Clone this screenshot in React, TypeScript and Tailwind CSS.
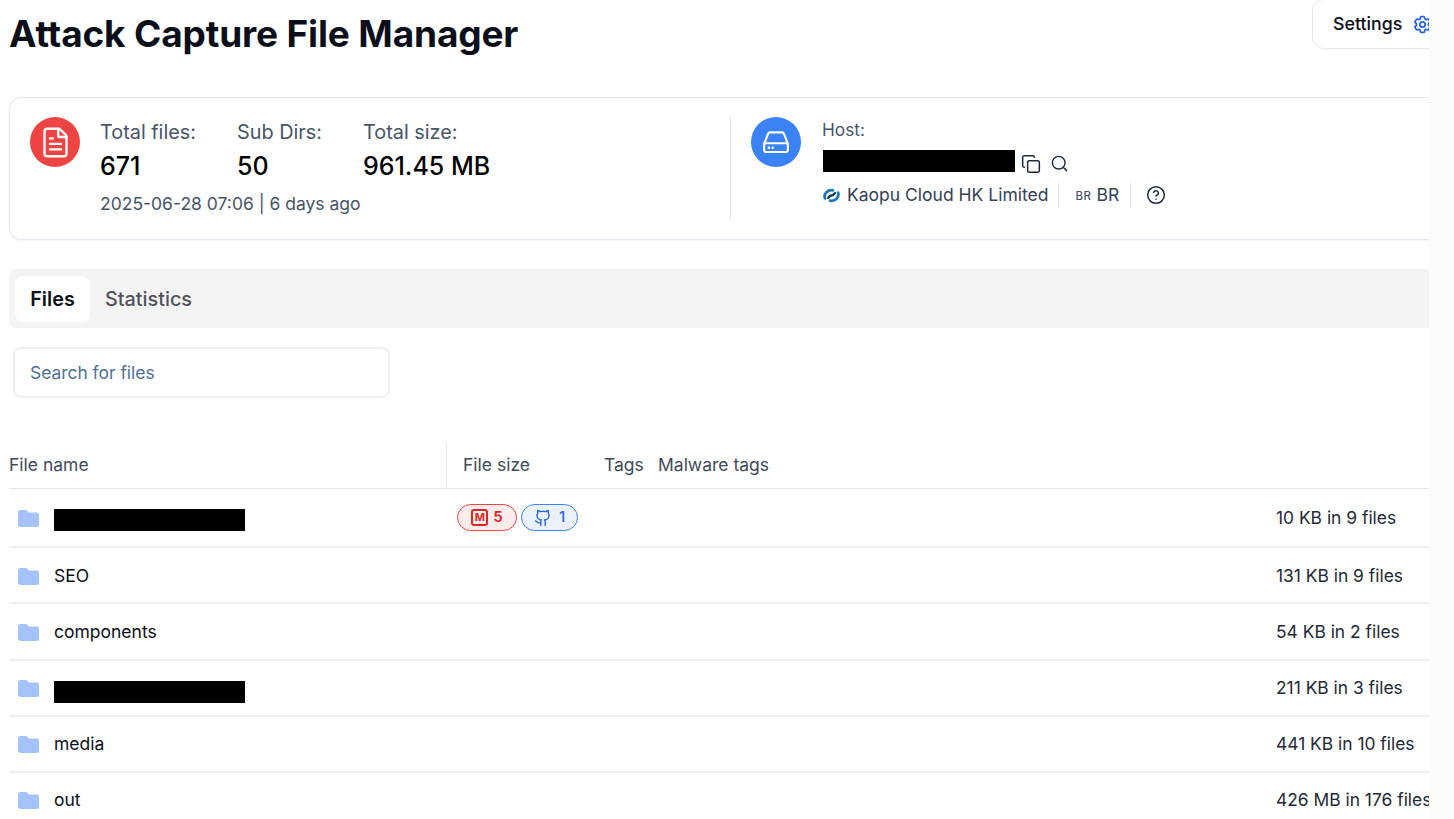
import { Copy, FileText, Github, Search, CircleHelp } from "lucide-react";
import { HiOutlineCog6Tooth } from "react-icons/hi2";

const ROWS = [
  { name: null, size: "10 KB in 9 files", h: "h-[59px] pt-[2px]", badges: true, bar: "mt-[2px]" },
  { name: "SEO", size: "131 KB in 9 files", h: "h-[56px] pt-[2px]" },
  { name: "components", size: "54 KB in 2 files", h: "h-[57px] pt-[2px]" },
  { name: null, size: "211 KB in 3 files", h: "h-[56px]", bar: "mt-[8px]" },
  { name: "media", size: "441 KB in 10 files", h: "h-[56px]" },
  { name: "out", size: "426 MB in 176 files", h: "h-[56px]" },
];

function Stat({ label, value }: { label: string; value: string }) {
  return (
    <div>
      <div className="text-[19.85px] leading-[24px] text-[#475569]">{label}</div>
      <div className="mt-[6px] text-[25px] leading-[32px] font-medium text-black">{value}</div>
    </div>
  );
}

function KaopuLogo() {
  return (
    <svg viewBox="0 0 18 16" className="ml-[1px] h-[15px] w-[17px]" fill="none" strokeLinecap="round">
      <path d="M2 11 C0.5 6 5 1.500 10.500 2.500" stroke="#1d78b5" strokeWidth="3" />
      <path d="M16 5 C17.500 10 13 14.500 7.500 13.500" stroke="#1d78b5" strokeWidth="3" />
      <path d="M5.500 10.500 C8 6 10 10 12.500 5.500" stroke="#123c5c" strokeWidth="2.600" />
    </svg>
  );
}

function DriveIcon() {
  return (
    <svg viewBox="0 0 24 24" className="h-[30px] w-[30px]" fill="none" stroke="white" strokeWidth="1.7" strokeLinecap="round" strokeLinejoin="round">
      <path d="M2.5 13.5 5.6 5.6A2 2 0 0 1 7.5 4.3h9a2 2 0 0 1 1.9 1.3l3.1 7.9" />
      <rect x="2.5" y="13" width="19" height="7" rx="1.6" />
      <path d="M6.3 16.5h.01M9.3 16.5h.01" strokeWidth="2" />
    </svg>
  );
}

function FolderIcon() {
  return (
    <svg viewBox="0 0 21 17" className="ml-[9px] h-[17px] w-[21px] shrink-0" fill="#a5c3fa">
      <path d="M2.5 0h5c.8 0 1.4.3 1.9.9L11 2.6h7.5A2.5 2.5 0 0 1 21 5.1v9.4a2.5 2.5 0 0 1-2.5 2.5h-16A2.5 2.5 0 0 1 0 14.500V2.500A2.500 2.500 0 0 1 2.500 0z" />
    </svg>
  );
}

export default function App() {
  return (
    <div className="flex h-[819px] overflow-hidden bg-[#fcfcfc] font-['Inter',sans-serif]">
      <div className="w-[1429px] shrink-0 overflow-hidden bg-white">
        <div className="w-[1460px] pl-[9px]">
          {/* header */}
          <div className="flex h-[97px] items-start justify-between">
            <h1 className="mt-[12px] text-[37px] leading-[44px] font-bold tracking-[-0.15px] text-[#0b0f19]">Attack Capture File Manager</h1>
            <div className="-mt-[1px] flex h-[50px] w-[148px] items-center gap-[10px] rounded-xl border border-[#e5e7eb] pl-[20px] shadow-[0_1px_1px_rgba(0,0,0,0.03)]">
              <span className="text-[17.8px] font-medium text-[#0b0f19]">Settings</span>
              <HiOutlineCog6Tooth className="h-[21px] w-[21px] text-[#2563eb]" strokeWidth={2} />
            </div>
          </div>

          {/* summary card */}
          <div className="flex h-[143px] rounded-xl border border-[#e2e8f0] py-[19px] pl-[20px] shadow-[0_1px_2px_rgba(0,0,0,0.05)]">
            <div className="flex w-[700px] gap-[20px]">
              <div className="flex h-[50px] w-[50px] items-center justify-center rounded-full bg-[#ef4444]">
                <FileText className="h-[33px] w-[33px] text-white" strokeWidth={1.7} />
              </div>
              <div className="pt-[3px]">
                <div className="flex gap-[41px]">
                  <Stat label="Total files:" value="671" />
                  <Stat label="Sub Dirs:" value="50" />
                  <Stat label="Total size:" value="961.45 MB" />
                </div>
                <div className="mt-[10px] text-[17.5px] leading-[24px] text-[#475569]">2025-06-28 07:06 | 6 days ago</div>
              </div>
            </div>
            <div className="flex h-[102px] gap-[21px] border-l border-[#e2e8f0] pl-[20px]">
              <div className="flex h-[50px] w-[50px] items-center justify-center rounded-full bg-[#3b82f6]">
                <DriveIcon />
              </div>
              <div>
                <div className="mt-[1px] text-[17.3px] leading-[24px] text-[#475569]">Host:</div>
                <div className="mt-[8px] flex h-[22px] items-center">
                  <div className="ml-[1px] h-[22px] w-[192px] bg-black" />
                  <Copy className="mt-[6px] ml-[6px] h-[20px] w-[20px] text-[#1e293b]" strokeWidth={1.8} />
                  <Search className="mt-[5px] ml-[9px] h-[19px] w-[19px] text-[#1e293b]" strokeWidth={1.8} />
                </div>
                <div className="mt-[10px] flex h-[26px] items-center text-[#334155]">
                  <KaopuLogo />
                  <span className="ml-[7px] text-[17.5px]">Kaopu Cloud HK Limited</span>
                  <div className="ml-[10px] h-[26px] border-l border-[#e2e8f0]" />
                  <span className="mt-[3px] ml-[16px] text-[11.5px] font-medium tracking-[0.5px] text-[#475569]">BR</span>
                  <span className="ml-[5px] text-[17.5px]">BR</span>
                  <div className="ml-[11px] h-[26px] border-l border-[#e2e8f0]" />
                  <CircleHelp className="ml-[15px] h-[20px] w-[20px] text-[#1e293b]" strokeWidth={1.8} />
                </div>
              </div>
            </div>
          </div>

          {/* tabs */}
          <div className="mt-[29px] flex h-[59px] items-center rounded-lg bg-[#f4f4f5] pl-[6px]">
            <div className="flex h-[46px] w-[75px] items-center justify-center rounded-lg bg-white pt-[2px] text-[19.8px] font-semibold text-[#0b0f19]">Files</div>
            <div className="ml-[15px] pt-[2px] text-[19.8px] font-medium text-[#52525b]">Statistics</div>
          </div>

          {/* search */}
          <div className="mt-[19px] ml-[4px] flex h-[51px] w-[377px] items-center rounded-lg border-2 border-[#f0f0f1] pt-[1px] pl-[15px] text-[17.4px] text-[#52709a]">
            Search for files
          </div>

          {/* table */}
          <div className="mt-[45px] w-[1420px]">
            <div className="flex h-[46px] items-center border-b border-[#e5e7eb] text-[17.5px] text-[#3f4a5a]">
              <div className="flex h-full w-[438px] items-center border-r border-[#e2e8f0]">File name</div>
              <div className="ml-[16px] w-[141px]">File size</div>
              <div className="w-[54px]">Tags</div>
              <div>Malware tags</div>
            </div>
            {ROWS.map((r, i) => (
              <div key={i} className={`flex items-center border-b-2 border-[#f0f0f2] ${r.h}`}>
                <FolderIcon />
                <div className="ml-[15px] w-[403px] shrink-0">
                  {r.name ? (
                    <span className="text-[17.5px] text-[#0b0f19]">{r.name}</span>
                  ) : (
                    <div className={`h-[22px] w-[191px] bg-black ${r.bar}`} />
                  )}
                </div>
                {r.badges && (
                  <div className="-mt-[2px] flex items-center gap-[4px]">
                    <span className="flex h-[27px] w-[60px] items-center justify-center gap-[5px] rounded-full border-[1.5px] border-[#ef4444] bg-[#fdecec] text-[15px] font-semibold text-[#dc2626]">
                      <span className="flex h-[17px] w-[17px] items-center justify-center rounded-[3px] border-2 border-[#dc2626] text-[11px] leading-none font-bold">M</span>
                      5
                    </span>
                    <span className="flex h-[27px] w-[57px] items-center justify-center gap-[7px] rounded-full border-[1.5px] border-[#3b82f6] bg-[#ebf2fe] text-[15px] font-medium text-[#2563eb]">
                      <Github className="h-[18px] w-[18px]" strokeWidth={1.8} />
                      1
                    </span>
                  </div>
                )}
                <div className="ml-auto w-[153px] shrink-0 text-[17.4px] whitespace-nowrap text-[#1f2937]">{r.size}</div>
              </div>
            ))}
          </div>
        </div>
      </div>
    </div>
  );
}
